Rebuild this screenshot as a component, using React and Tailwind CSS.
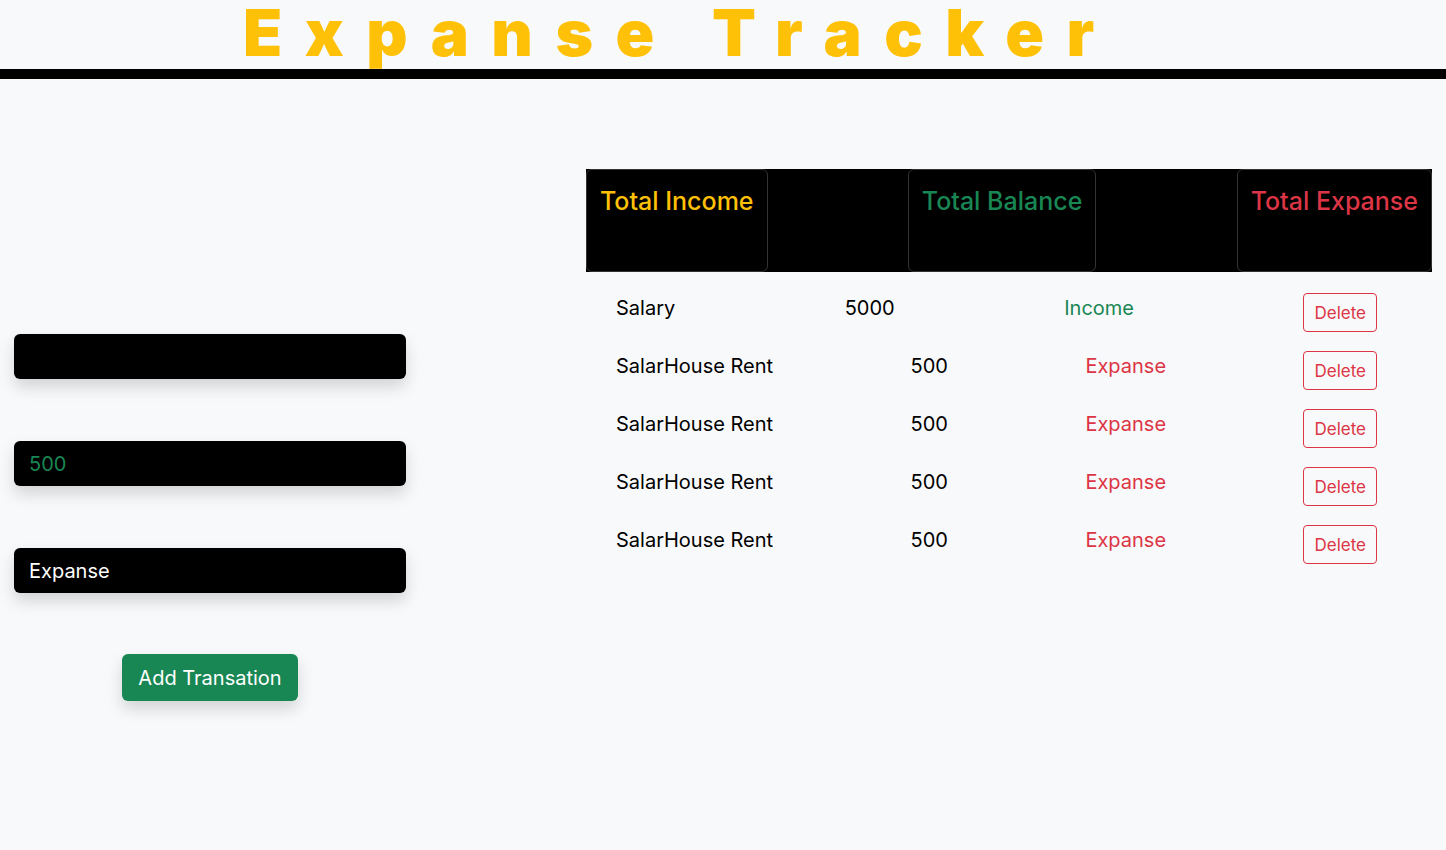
import React from 'react';

const rows = [
  { name: 'Salary', amount: '5000', type: 'Income' },
  { name: 'SalarHouse Rent', amount: '500', type: 'Expanse' },
  { name: 'SalarHouse Rent', amount: '500', type: 'Expanse' },
  { name: 'SalarHouse Rent', amount: '500', type: 'Expanse' },
  { name: 'SalarHouse Rent', amount: '500', type: 'Expanse' },
];

export default function App() {
  return (
    <div className="min-h-[850px] bg-[#f8f9fa] font-['Inter',sans-serif] text-[#212529]">
      {/* Header */}
      <div className="h-[69px] pl-[243px] flex items-start">
        <h1 className="text-[64px] leading-[66px] font-black tracking-[22.5px] text-[#ffc107] whitespace-nowrap">
          Expanse Tracker
        </h1>
      </div>
      <div className="h-[10px] bg-black" />

      <div className="flex">
        {/* Form */}
        <div className="w-[420px] px-[14px] pt-[255px] flex flex-col">
          <div className="h-[45px] rounded-md bg-black shadow-[0_8px_16px_rgba(0,0,0,0.15)]" />
          <div className="mt-[62px] h-[45px] rounded-md bg-black px-[15px] flex items-center text-[20px] text-[#198754] shadow-[0_8px_16px_rgba(0,0,0,0.15)]">
            500
          </div>
          <div className="mt-[62px] h-[45px] rounded-md bg-black px-[15px] flex items-center text-[20px] text-white shadow-[0_8px_16px_rgba(0,0,0,0.15)]">
            Expanse
          </div>
          <button className="mt-[61px] self-center h-[47px] px-[16px] rounded-md bg-[#198754] text-white text-[20px] shadow-[0_8px_16px_rgba(0,0,0,0.15)]">
            Add Transation
          </button>
        </div>

        {/* Summary + list */}
        <div className="ml-[166px] w-[846px] pt-[90px]">
          <div className="h-[103px] bg-black flex justify-between">
            <div className="rounded-md border border-[#333] p-[13px] text-[25px] leading-[36px] font-medium text-[#ffc107]">Total Income</div>
            <div className="rounded-md border border-[#333] p-[13px] text-[25px] leading-[36px] font-medium text-[#198754]">Total Balance</div>
            <div className="rounded-md border border-[#333] p-[13px] text-[25px] leading-[36px] font-medium text-[#dc3545]">Total Expanse</div>
          </div>

          <div className="mt-[21px] ml-[30px] w-[761px] flex flex-col gap-[19px]">
            {rows.map((r, i) => (
              <div key={i} className="flex justify-between items-start text-[20px] leading-[31px] text-black">
                <span>{r.name}</span>
                <span>{r.amount}</span>
                <span className={r.type === 'Income' ? 'text-[#198754]' : 'text-[#dc3545]'}>{r.type}</span>
                <button className="h-[39px] px-[10px] rounded border border-[#dc3545] text-[#dc3545] text-[17px] leading-[24px]">
                  Delete
                </button>
              </div>
            ))}
          </div>
        </div>
      </div>
    </div>
  );
}
